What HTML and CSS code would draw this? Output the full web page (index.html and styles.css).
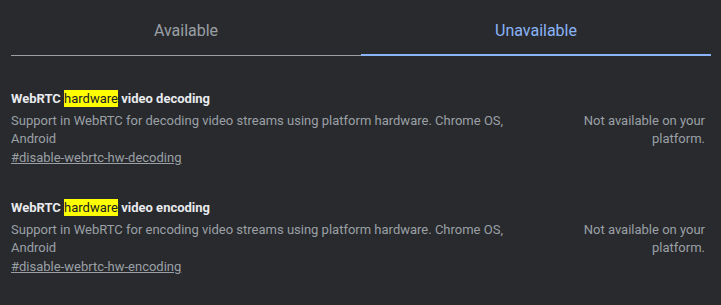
FILE: index.html
```html
<!DOCTYPE html>
<html lang="en">
<head>
  <meta charset="UTF-8" />
  <title>Experiments</title>
  <link rel="stylesheet" href="styles.css">
</head>
<body>

  <div class="tabs">
    <div class="tab">Available</div>
    <div class="tab active">Unavailable</div>
  </div>

  <div class="experiments">
    <div class="experiment">
      <div class="exp-title">WebRTC <span class="hit">hardware</span> video decoding</div>
      <div class="exp-desc">Support in WebRTC for decoding video streams using platform hardware. Chrome OS, Android</div>
      <a class="exp-link" href="#disable-webrtc-hw-decoding">#disable-webrtc-hw-decoding</a>
      <div class="exp-action">Not available on your platform.</div>
    </div>

    <div class="experiment">
      <div class="exp-title">WebRTC <span class="hit">hardware</span> video encoding</div>
      <div class="exp-desc">Support in WebRTC for encoding video streams using platform hardware. Chrome OS, Android</div>
      <a class="exp-link" href="#disable-webrtc-hw-encoding">#disable-webrtc-hw-encoding</a>
      <div class="exp-action">Not available on your platform.</div>
    </div>
  </div>

</body>
</html>
```

FILE: styles.css
```css
body {
  margin: 0;
  background: #292a2d;
  font-family: Roboto, "Liberation Sans", Arial, sans-serif;
  color: #9aa0a6;
  height: 305px;
  overflow: hidden;
}

/* Tabs */
.tabs {
  display: flex;
  margin: 0 10px 0 11px;
}

.tab {
  flex: 1;
  text-align: center;
  font-size: 16px;
  line-height: 20px;
  padding-top: 21px;
  height: 34px;
  border-bottom: 1px solid #9aa0a6;
  color: #9aa0a6;
}

.tab.active {
  color: #8ab4f8;
  height: 33px;
  border-bottom: 2px solid #8ab4f8;
}

/* Experiment list */
.experiments {
  padding: 34px 16px 0 11px;
}

.experiment {
  display: grid;
  grid-template-columns: 1fr 150px;
  column-gap: 20px;
  font-size: 13px;
  line-height: 18px;
  margin-bottom: 32px;
}

.exp-title {
  grid-column: 1 / 3;
  color: #e8eaed;
  font-weight: bold;
}

.hit {
  background: #ffff00;
  color: #202124;
  font-weight: normal;
  padding: 1px 0;
}

.exp-desc {
  grid-column: 1;
  margin-top: 4px;
}

.exp-link {
  grid-column: 1;
  justify-self: start;
  margin-top: 1px;
  color: #9aa0a6;
}

.exp-action {
  grid-column: 2;
  grid-row: 2 / 4;
  margin-top: 4px;
  text-align: right;
}
```
